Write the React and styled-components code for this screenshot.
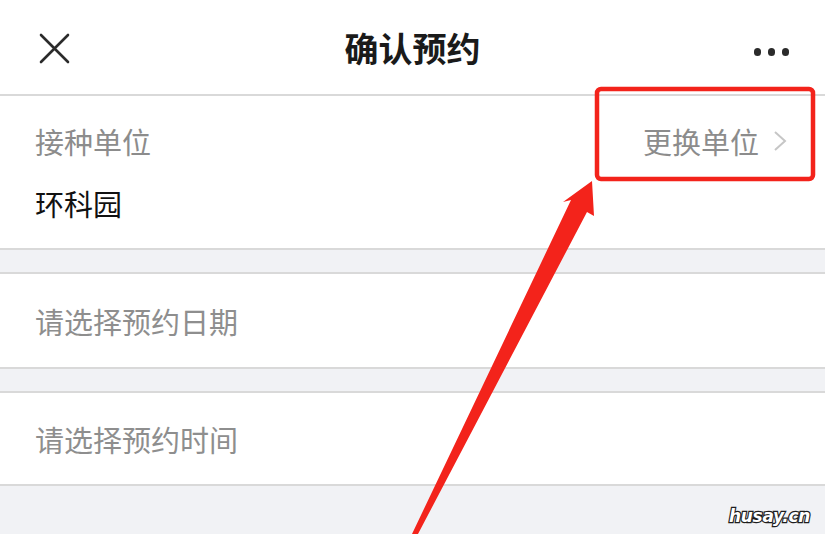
import React from 'react'
import styled, { createGlobalStyle } from 'styled-components'

const GlobalStyle = createGlobalStyle`
  html, body {
    margin: 0;
    padding: 0;
    background: #f1f2f5;
  }
  body {
    font-family: "Noto Sans CJK SC", "Noto Sans", sans-serif;
  }
`

function App() {
    return (
        <Page>
            <GlobalStyle />
            <Header>
                <IconButton aria-label="close">
                    <svg width="32" height="32" viewBox="0 0 32 32">
                        <path d="M2 2 L29 29 M29 2 L2 29" stroke="#2b2b2b" strokeWidth="2.6" strokeLinecap="round" />
                    </svg>
                </IconButton>
                <Title>确认预约</Title>
                <More aria-label="more">
                    <Dot />
                    <Dot />
                    <Dot />
                </More>
            </Header>

            <Card>
                <UnitBody>
                    <LabelRow>
                        <Label>接种单位</Label>
                        <Change>
                            更换单位
                            <svg width="14" height="22" viewBox="0 0 14 22">
                                <path d="M2 2 L12 11 L2 20" fill="none" stroke="#c6c6c6" strokeWidth="2" />
                            </svg>
                        </Change>
                    </LabelRow>
                    <Value>环科园</Value>
                </UnitBody>
            </Card>

            <Card>
                <PickRow $height={93}>请选择预约日期</PickRow>
            </Card>

            <Card>
                <PickRow $height={91}>请选择预约时间</PickRow>
            </Card>

            <Annotation width="825" height="534" viewBox="0 0 825 534">
                <rect x="597" y="89" width="216" height="90" rx="4" fill="none" stroke="#f3231b" strokeWidth="4.5" />
                <polygon
                    points="592,181 563,202 571,200 412,534 418,534 587,212 594,216"
                    fill="#f3231b"
                />
            </Annotation>

            <Watermark>husay.cn</Watermark>
        </Page>
    )
}

export default App

const Page = styled.div`
  position: relative;
  width: 825px;
  height: 534px;
  overflow: hidden;
  background: #f1f2f5;
`

const Header = styled.div`
  position: relative;
  height: 94px;
  background: #fff;
  display: flex;
  align-items: center;
  justify-content: space-between;
  padding: 0 36px 0 39px;
  box-sizing: border-box;
`

const IconButton = styled.div`
  width: 32px;
  height: 32px;
  display: flex;
  margin-top: 4px;
`

const Title = styled.h1`
  position: absolute;
  left: 0;
  right: 0;
  margin: 0;
  text-align: center;
  font-size: 34px;
  font-weight: 700;
  color: #1a1a1a;
  line-height: 40px;
  margin-top: 2px;
  pointer-events: none;
`

const More = styled.div`
  display: flex;
  gap: 6.5px;
  margin-top: 10px;
`

const Dot = styled.span`
  width: 7.5px;
  height: 7.5px;
  border-radius: 50%;
  background: #2b2b2b;
`

const Card = styled.div`
  background: #fff;
  border-top: 2px solid #d9d9d9;
  border-bottom: 2px solid #d9d9d9;
  & + & {
    margin-top: 22px;
  }
`

const UnitBody = styled.div`
  height: 152px;
  box-sizing: border-box;
  padding: 27px 38px 0 35px;
`

const LabelRow = styled.div`
  display: flex;
  align-items: center;
  justify-content: space-between;
  height: 36px;
`

const Label = styled.span`
  font-size: 29px;
  line-height: 36px;
  color: #8c8c8c;
`

const Change = styled.span`
  display: flex;
  align-items: center;
  gap: 14px;
  font-size: 29px;
  line-height: 36px;
  color: #8c8c8c;
`

const Value = styled.div`
  margin-top: 26px;
  font-size: 29px;
  line-height: 36px;
  color: #111;
`

const PickRow = styled.div`
  height: ${p => p.$height}px;
  display: flex;
  align-items: center;
  padding-left: 35px;
  font-size: 29px;
  color: #8e8e8e;
`

const Annotation = styled.svg`
  position: absolute;
  left: 0;
  top: 0;
  pointer-events: none;
`

const Watermark = styled.div`
  position: absolute;
  right: 15px;
  bottom: 8px;
  font-family: "DejaVu Sans", sans-serif;
  font-weight: 700;
  font-style: italic;
  font-size: 17px;
  letter-spacing: -0.3px;
  color: #fff;
  -webkit-text-stroke: 2.4px #1e1e1e;
  paint-order: stroke fill;
`
